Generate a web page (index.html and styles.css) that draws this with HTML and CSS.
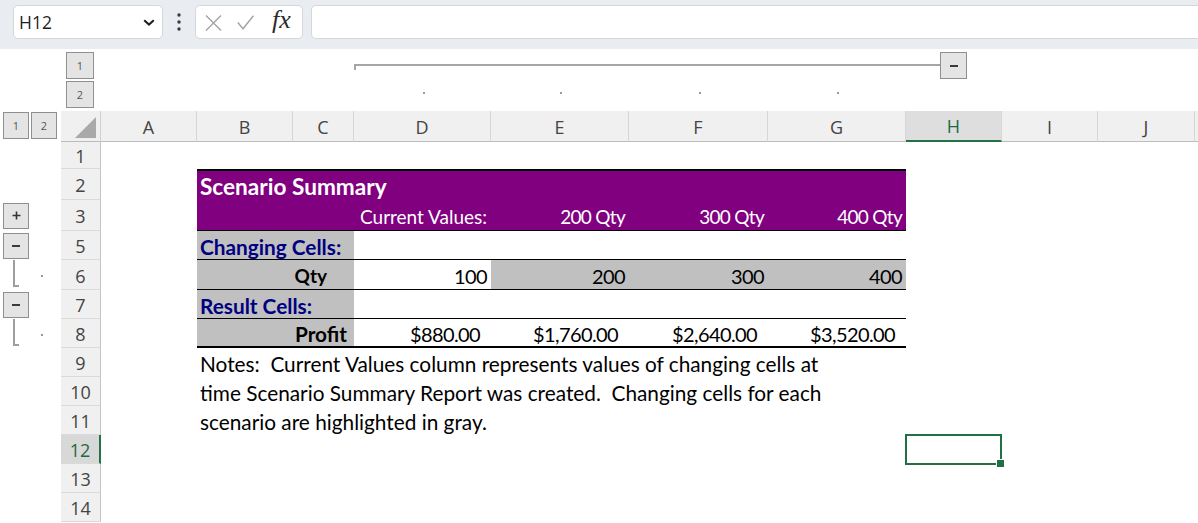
FILE: index.html
```html
<!DOCTYPE html>
<html>
<head>
<meta charset="utf-8">
<title>Scenario Summary</title>
<link rel="stylesheet" href="styles.css">
</head>
<body>
<div class="topbar">
  <div class="namebox">
    <span class="nb-text">H12</span>
    <svg class="chev" width="12" height="7" viewBox="0 0 12 7"><path d="M1.2 1.2 L6 5.6 L10.8 1.2" fill="none" stroke="#1f1f1f" stroke-width="2"/></svg>
  </div>
  <div class="vdots">
    <svg width="4" height="18" viewBox="0 0 4 18"><circle cx="2" cy="2" r="1.7" fill="#3a3a3a"/><circle cx="2" cy="9" r="1.7" fill="#3a3a3a"/><circle cx="2" cy="16" r="1.7" fill="#3a3a3a"/></svg>
  </div>
  <div class="fxbox">
    <svg class="ico-x" width="17" height="16" viewBox="0 0 17 16"><path d="M1 0.5 L16 15.5 M16 0.5 L1 15.5" fill="none" stroke="#a3a3a3" stroke-width="1.4"/></svg>
    <svg class="ico-ok" width="17" height="15" viewBox="0 0 17 15"><path d="M0.8 7.5 L6 13.8 L16.4 0.8" fill="none" stroke="#a3a3a3" stroke-width="1.4"/></svg>
    <span class="fx">fx</span>
  </div>
  <div class="formula"></div>
</div>

<div class="sheet">
  <!-- outline level row -->
  <div class="r">
    <div class="olx"></div>
    <div class="lvl"><span class="btn lv">1</span><span class="btn lv">2</span></div>
    <div class="s3"></div>
    <div class="olc"><div class="ln first"><i class="dot"></i></div></div>
    <div class="olc"><div class="ln"><i class="dot"></i></div></div>
    <div class="olc"><div class="ln"><i class="dot"></i></div></div>
    <div class="olc"><div class="ln"><i class="dot"></i></div></div>
    <div class="olh"><div class="seg"></div><span class="btn sq"><i class="bar"></i></span></div>
    <div class="s3"></div>
  </div>

  <!-- column headers -->
  <div class="r">
    <div class="olx lvl2"><span class="btn lvh">1</span><span class="btn lvh">2</span></div>
    <div class="corner"><svg width="21" height="21" viewBox="0 0 21 21"><polygon points="21,0 21,21 0,21" fill="#a9a9a9"/></svg></div>
    <div class="ch">A</div>
    <div class="ch">B</div>
    <div class="ch">C</div>
    <div class="ch">D</div>
    <div class="ch">E</div>
    <div class="ch">F</div>
    <div class="ch">G</div>
    <div class="ch hsel">H</div>
    <div class="ch">I</div>
    <div class="ch">J</div>
    <div class="ch last"></div>
  </div>

  <!-- row 1 -->
  <div class="r">
    <div class="olx"></div>
    <div class="rh">1</div>
    <div class="s11"></div>
  </div>

  <!-- row 2 -->
  <div class="r">
    <div class="olx"></div>
    <div class="rh">2</div>
    <div class="c"></div>
    <div class="c pu title top">Scenario Summary</div>
    <div class="s4"></div>
  </div>

  <!-- row 3 -->
  <div class="r">
    <div class="olx ol-btn"><span class="btn pm"><svg width="9" height="9" viewBox="0 0 9 9"><path d="M4.5 0.5 V8.5 M0.5 4.5 H8.5" stroke="#333" stroke-width="1.6"/></svg></span></div>
    <div class="rh">3</div>
    <div class="c"></div>
    <div class="c pu b2 bb"></div>
    <div class="c pu bb pl hd">Current Values:</div>
    <div class="c pu bb pr hd hq">200 Qty</div>
    <div class="c pu bb pr hd hq">300 Qty</div>
    <div class="c pu bb pr hd hq">400 Qty</div>
    <div class="s4"></div>
  </div>

  <!-- row 5 -->
  <div class="r">
    <div class="olx ol-btn"><span class="btn pm"><i class="bar"></i></span></div>
    <div class="rh">5</div>
    <div class="c"></div>
    <div class="c gr b2 bb lab">Changing Cells:</div>
    <div class="c d4 bb"></div>
    <div class="s4"></div>
  </div>

  <!-- row 6 -->
  <div class="r">
    <div class="olx ol-brk"><span class="brk"></span><i class="odot"></i></div>
    <div class="rh">6</div>
    <div class="c"></div>
    <div class="c gr b2 bb bold pr qty">Qty</div>
    <div class="c bb pr num">100</div>
    <div class="c gr bb pr num">200</div>
    <div class="c gr bb pr num">300</div>
    <div class="c gr bb pr num">400</div>
    <div class="s4"></div>
  </div>

  <!-- row 7 -->
  <div class="r">
    <div class="olx ol-btn"><span class="btn pm"><i class="bar"></i></span></div>
    <div class="rh">7</div>
    <div class="c"></div>
    <div class="c gr b2 bb lab">Result Cells:</div>
    <div class="c d4 bb"></div>
    <div class="s4"></div>
  </div>

  <!-- row 8 -->
  <div class="r">
    <div class="olx ol-brk"><span class="brk"></span><i class="odot"></i></div>
    <div class="rh">8</div>
    <div class="c"></div>
    <div class="c gr b2 bbt bold pr profit">Profit</div>
    <div class="c bbt pr acc num">$880.00</div>
    <div class="c bbt pr acc num">$1,760.00</div>
    <div class="c bbt pr acc num">$2,640.00</div>
    <div class="c bbt pr acc num">$3,520.00</div>
    <div class="s4"></div>
  </div>

  <!-- rows 9-11 -->
  <div class="r">
    <div class="olx"></div>
    <div class="rh">9</div>
    <div class="c"></div>
    <div class="c note">Notes:&nbsp; Current Values column represents values of changing cells at</div>
    <div class="s4"></div>
  </div>
  <div class="r">
    <div class="olx"></div>
    <div class="rh">10</div>
    <div class="c"></div>
    <div class="c note">time Scenario Summary Report was created.&nbsp; Changing cells for each</div>
    <div class="s4"></div>
  </div>
  <div class="r">
    <div class="olx"></div>
    <div class="rh">11</div>
    <div class="c"></div>
    <div class="c note">scenario are highlighted in gray.</div>
    <div class="s4"></div>
  </div>

  <!-- row 12 -->
  <div class="r">
    <div class="olx"></div>
    <div class="rh rsel">12</div>
    <div class="c"></div>
    <div class="c span6"></div>
    <div class="c cellsel"></div>
    <div class="s3"></div>
  </div>

  <!-- rows 13-14 -->
  <div class="r">
    <div class="olx"></div>
    <div class="rh">13</div>
    <div class="s11"></div>
  </div>
  <div class="r">
    <div class="olx"></div>
    <div class="rh">14</div>
    <div class="s11"></div>
  </div>
</div>
</body>
</html>
```

FILE: styles.css
```css
* { box-sizing: border-box; }

html, body {
  margin: 0;
  padding: 0;
  background: #ffffff;
}

body {
  width: 1198px;
  height: 523px;
  overflow: hidden;
  font-family: "Open Sans", "Noto Sans", sans-serif;
  color: #000;
}

/* ---------- formula bar ---------- */
.topbar {
  height: 49px;
  background: #e9ecf0;
  display: flex;
  align-items: flex-start;
  padding: 5px 0 0 13px;
}

.namebox {
  width: 150px;
  height: 34px;
  background: #fff;
  border: 1px solid #d4d7db;
  border-radius: 5px;
  display: flex;
  align-items: center;
  justify-content: space-between;
  padding: 0 7px 0 5px;
}

.nb-text {
  font-size: 17.5px;
  color: #1f1f1f;
}

.vdots {
  width: 32px;
  height: 34px;
  display: flex;
  align-items: center;
  justify-content: center;
}

.fxbox {
  width: 108px;
  height: 34px;
  background: #fff;
  border: 1px solid #d4d7db;
  border-radius: 5px;
  display: flex;
  align-items: center;
  padding-left: 9px;
}

.ico-x { margin-top: 1px; }
.ico-ok { margin-left: 15px; }

.fx {
  margin-left: 18px;
  font-family: "Liberation Serif", "DejaVu Serif", serif;
  font-style: italic;
  font-size: 26px;
  color: #2b2b2b;
  line-height: 1;
  margin-top: -4px;
}

.formula {
  flex: 1;
  height: 34px;
  margin-left: 8px;
  background: #fff;
  border: 1px solid #d4d7db;
  border-right: none;
  border-radius: 5px 0 0 5px;
}

/* ---------- sheet grid ---------- */
.sheet {
  display: grid;
  grid-template-columns: 61px 40px 96px 96px 61px 137px 138px 139px 138px 96px 96px 97px 1fr;
  grid-template-rows: 62px 31px 27px 31px 31px 29px 30px 29px 29px 29px 29px 29px 29px 29px 29px;
}

.r { display: contents; }

.s3 { grid-column: span 3; }
.s4 { grid-column: span 4; }
.s11 { grid-column: span 11; }
.span6 { grid-column: span 6; }
.b2 { grid-column: span 2; }
.d4 { grid-column: span 4; }

/* outline symbols */
.btn {
  display: flex;
  align-items: center;
  justify-content: center;
  background: #e4e4e4;
  border: 1px solid #8f8f8f;
  color: #555;
  font-size: 11px;
  line-height: 1;
}

.lvl {
  display: flex;
  flex-direction: column;
  gap: 2px;
  padding: 3px 0 0 5px;
}

.lv { width: 28px; height: 27px; }

.olc { padding-top: 15px; }

.ln {
  height: 30px;
  border-top: 2px solid #a6a6a6;
  display: flex;
  justify-content: center;
  align-items: flex-end;
}

.ln.first {
  background: linear-gradient(#a6a6a6, #a6a6a6) no-repeat 0 0 / 2px 4px;
}

.dot {
  display: block;
  width: 2px;
  height: 2px;
  background: #9a9a9a;
  margin-left: 2px;
}

.olh {
  display: flex;
  align-items: flex-start;
  padding-top: 3px;
}

.seg {
  width: 34px;
  margin-top: 12px;
  border-top: 2px solid #a6a6a6;
}

.sq { width: 27px; height: 27px; }

.bar {
  display: block;
  width: 8px;
  height: 2px;
  background: #3a3a3a;
}

.lvl2 {
  display: flex;
  gap: 2px;
  padding: 1px 0 0 3px;
}

.lvh { width: 26px; height: 27px; }

.ol-btn {
  display: flex;
  align-items: center;
  padding-left: 3px;
}

.pm { width: 26px; height: 26px; }

.ol-brk {
  display: flex;
  align-items: flex-start;
  padding-left: 13px;
}

.brk {
  display: block;
  width: 6px;
  height: 27px;
  border-left: 2px solid #9d9d9d;
  border-bottom: 2px solid #9d9d9d;
}

.odot {
  display: block;
  width: 2px;
  height: 2px;
  background: #9a9a9a;
  margin: 15px 0 0 22px;
}

/* headers */
.corner {
  background: #f0f0f0;
  border-right: 1px solid #d0d0d0;
  border-bottom: 1px solid #bcbcbc;
  display: flex;
  align-items: flex-end;
  justify-content: flex-end;
  padding: 0 4px 3px 0;
}

.ch {
  background: #f0f0f0;
  border-right: 1px solid #d6d6d6;
  border-bottom: 1px solid #bcbcbc;
  display: flex;
  align-items: center;
  justify-content: center;
  font-size: 18px;
  color: #444;
  padding-top: 1px;
}

.ch.last { border-right: none; }

.ch.hsel {
  background: #dedede;
  color: #1d6b40;
  border-bottom: 2px solid #217346;
}

.rh {
  background: #f0f0f0;
  border-right: 1px solid #c4c4c4;
  border-bottom: 1px solid #dadada;
  display: flex;
  align-items: center;
  justify-content: center;
  font-size: 18px;
  color: #444;
  padding-top: 2px;
}

.rh.rsel {
  background: #d8d8d8;
  color: #1d6b40;
  border-right: 2px solid #217346;
}

/* cells */
.c {
  display: flex;
  align-items: center;
  padding-top: 2px;
  font-family: "Lato", "Carlito", "Liberation Sans", sans-serif;
  font-size: 20.8px;
  white-space: nowrap;
  color: #000;
}

.pu { background: #800080; color: #fff; }
.gr { background: #c0c0c0; }

.title {
  grid-column: span 6;
  font-weight: 700;
  font-size: 22.6px;
  padding-left: 3px;
}

.hd { font-size: 19px; }
.hq { letter-spacing: -0.7px; }
.num { font-size: 20px; letter-spacing: -0.6px; }

.top { border-top: 2px solid #000; }
.bb { border-bottom: 1px solid #000; }
.bbt { border-bottom: 2px solid #000; }

.pl { padding-left: 6px; }
.pr { justify-content: flex-end; padding-right: 4px; }
.acc { padding-right: 11px; }
.qty { padding-right: 27px; font-size: 19px; }
.profit { padding-right: 7px; }

.bold { font-weight: 700; }

.lab {
  font-weight: 700;
  color: #000080;
  padding-left: 3px;
}

.note {
  grid-column: span 6;
  padding-left: 3px;
}

.cellsel {
  position: relative;
  border: 2px solid #1e7145;
  margin: -1px 0 -1px -1px;
}

.cellsel::after {
  content: "";
  position: absolute;
  right: -5px;
  bottom: -5px;
  width: 7px;
  height: 7px;
  background: #1e7145;
  border: 1px solid #fff;
}
```
